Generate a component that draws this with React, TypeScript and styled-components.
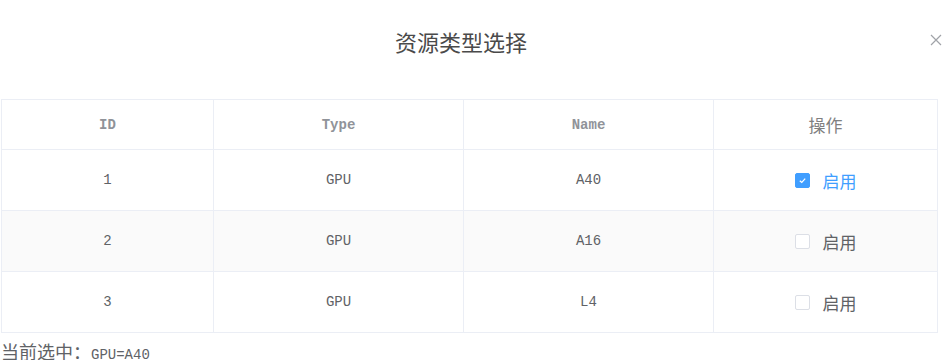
import React, { useState } from 'react';
import styled, { createGlobalStyle } from 'styled-components';

const GlobalStyle = createGlobalStyle`
  html, body {
    margin: 0;
    padding: 0;
    background: #ffffff;
    font-family: "Noto Sans CJK SC", "Noto Sans", sans-serif;
  }
`;

const Dialog = styled.div`
  width: 950px;
  height: 360px;
  overflow: hidden;
  box-sizing: border-box;
  padding: 0 13px 0 1px;
`;

const Header = styled.div`
  position: relative;
  height: 99px;
  display: flex;
  justify-content: center;
  padding-top: 25px;
  box-sizing: border-box;
`;

const Title = styled.h2`
  margin: 0 0 0 -16px;
  font-size: 22px;
  font-weight: 400;
  line-height: 32px;
  color: #4a4a4a;
`;

const Close = styled.button`
  position: absolute;
  right: -7px;
  top: 33px;
  width: 16px;
  height: 16px;
  padding: 0;
  border: none;
  background: none;
  cursor: pointer;
`;

const Table = styled.table`
  width: 936px;
  border-collapse: collapse;
  table-layout: fixed;
  border: 1px solid #ebeef5;
`;

const Th = styled.th`
  height: 49px;
  border: 1px solid #ebeef5;
  color: #909399;
  font-weight: 700;
  font-size: 14px;
  font-family: "Liberation Mono", "Noto Sans CJK SC", monospace;
  text-align: center;
  padding: 0;
`;

const ThCn = styled(Th)`
  font-family: "Noto Sans CJK SC", sans-serif;
  font-size: 17px;
  font-weight: 400;
  color: #808080;
`;

const Row = styled.tr<{ $striped: boolean }>`
  background: ${({ $striped }) => ($striped ? '#fafafa' : '#ffffff')};
`;

const Td = styled.td`
  height: 60px;
  border: 1px solid #ebeef5;
  color: #606266;
  font-size: 14px;
  font-family: "Liberation Mono", monospace;
  text-align: center;
  padding: 0;
`;

const CheckLabel = styled.label<{ $checked: boolean }>`
  display: inline-flex;
  align-items: center;
  gap: 13px;
  cursor: pointer;
  font-size: 17px;
  font-family: "Noto Sans CJK SC", sans-serif;
  color: ${({ $checked }) => ($checked ? '#409eff' : '#606266')};
  margin-left: 0;
`;

const Box = styled.span<{ $checked: boolean }>`
  width: 15px;
  height: 15px;
  box-sizing: border-box;
  border-radius: 2px;
  border: 1px solid ${({ $checked }) => ($checked ? '#409eff' : '#dcdfe6')};
  background: ${({ $checked }) => ($checked ? '#409eff' : '#ffffff')};
  display: inline-flex;
  align-items: center;
  justify-content: center;
`;

const Footer = styled.div`
  margin-top: 5px;
  font-size: 18px;
  color: #606266;
  line-height: 26px;
`;

const Mono = styled.span`
  font-family: "Liberation Mono", monospace;
  font-size: 14px;
`;

const rows = [
  { id: 1, type: 'GPU', name: 'A40' },
  { id: 2, type: 'GPU', name: 'A16' },
  { id: 3, type: 'GPU', name: 'L4' },
];

export default function App() {
  const [selected, setSelected] = useState<number | null>(1);
  const current = rows.find((r) => r.id === selected);

  return (
    <Dialog>
      <GlobalStyle />
      <Header>
        <Title>资源类型选择</Title>
        <Close aria-label="close">
          <svg width="12" height="12" viewBox="0 0 12 12">
            <path d="M1 1 L11 11 M11 1 L1 11" stroke="#a0a3a8" strokeWidth="1.2" />
          </svg>
        </Close>
      </Header>
      <Table>
        <colgroup>
          <col style={{ width: 212 }} />
          <col style={{ width: 250 }} />
          <col style={{ width: 250 }} />
          <col style={{ width: 224 }} />
        </colgroup>
        <thead>
          <tr>
            <Th>ID</Th>
            <Th>Type</Th>
            <Th>Name</Th>
            <ThCn>操作</ThCn>
          </tr>
        </thead>
        <tbody>
          {rows.map((r, i) => {
            const checked = selected === r.id;
            return (
              <Row key={r.id} $striped={i % 2 === 1}>
                <Td>{r.id}</Td>
                <Td>{r.type}</Td>
                <Td>{r.name}</Td>
                <Td>
                  <CheckLabel $checked={checked} onClick={() => setSelected(checked ? null : r.id)}>
                    <Box $checked={checked}>
                      {checked && (
                        <svg width="9" height="9" viewBox="0 0 10 10">
                          <path d="M2 5.2 L4.2 7.2 L8 3" fill="none" stroke="#fff" strokeWidth="1.4" />
                        </svg>
                      )}
                    </Box>
                    启用
                  </CheckLabel>
                </Td>
              </Row>
            );
          })}
        </tbody>
      </Table>
      <Footer>
        当前选中：<Mono>{current ? `${current.type}=${current.name}` : ''}</Mono>
      </Footer>
    </Dialog>
  );
}
